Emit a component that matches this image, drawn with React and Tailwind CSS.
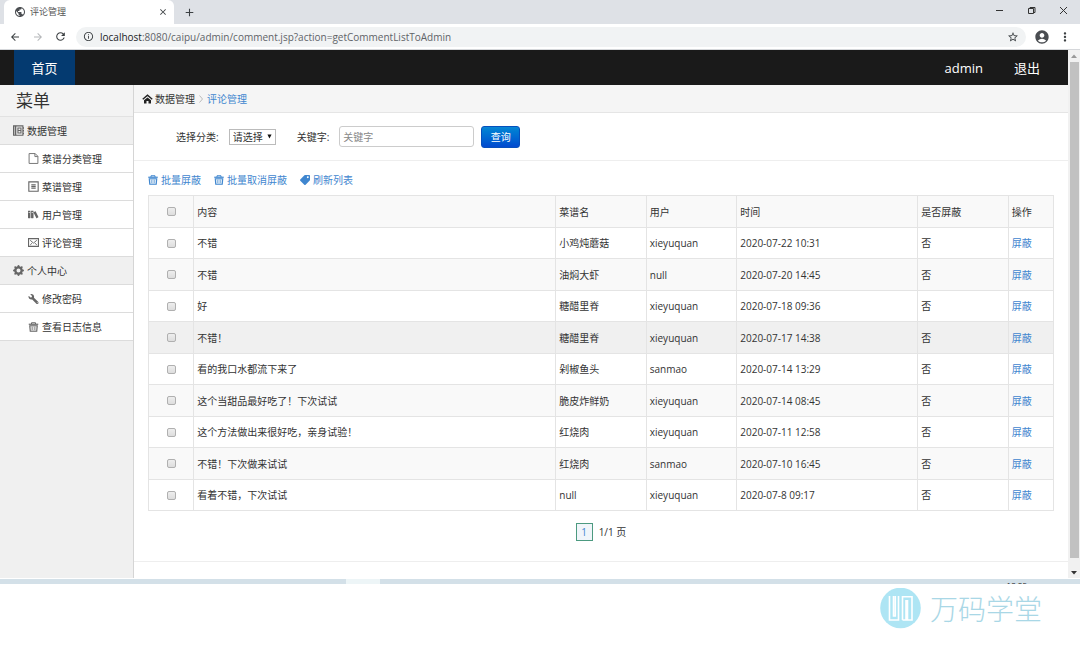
import { useState } from "react";
import {
  MdPublic, MdClose, MdAdd, MdArrowBack, MdArrowForward, MdRefresh,
  MdInfoOutline, MdStarBorder, MdAccountCircle, MdMoreVert
} from "react-icons/md";
import { FaTag, FaWrench } from "react-icons/fa";
import { BsGearFill } from "react-icons/bs";
import { ImBooks } from "react-icons/im";

const comments = [
  { id: 1, content: "不错", dish: "小鸡炖蘑菇", user: "xieyuquan", time: "2020-07-22 10:31" },
  { id: 2, content: "不错", dish: "油焖大虾", user: "null", time: "2020-07-20 14:45" },
  { id: 3, content: "好", dish: "糖醋里脊", user: "xieyuquan", time: "2020-07-18 09:36" },
  { id: 4, content: "不错！", dish: "糖醋里脊", user: "xieyuquan", time: "2020-07-17 14:38", active: true },
  { id: 5, content: "看的我口水都流下来了", dish: "剁椒鱼头", user: "sanmao", time: "2020-07-14 13:29" },
  { id: 6, content: "这个当甜品最好吃了！下次试试", dish: "脆皮炸鲜奶", user: "xieyuquan", time: "2020-07-14 08:45" },
  { id: 7, content: "这个方法做出来很好吃，亲身试验！", dish: "红烧肉", user: "xieyuquan", time: "2020-07-11 12:58" },
  { id: 8, content: "不错！下次做来试试", dish: "红烧肉", user: "sanmao", time: "2020-07-10 16:45" },
  { id: 9, content: "看着不错，下次试试", dish: "null", user: "xieyuquan", time: "2020-07-8 09:17" },
];

const columns = [
  { label: "内容", width: "w-[40%]" },
  { label: "菜谱名", width: "w-[10%]" },
  { label: "用户", width: "w-[10%]" },
  { label: "时间", width: "w-[20%]" },
  { label: "是否屏蔽", width: "w-[10%]" },
  { label: "操作", width: "w-[5%]" },
];

function HomeIcon() {
  return (
    <svg viewBox="0 0 22 20" className="h-[10px] w-[11px]">
      <path d="M1.5 10.5 11 2.5l9.5 8" fill="none" stroke="#222" strokeWidth="2.8" />
      <path d="M4 12.5 11 6.800l7 5.700V19h-5v-5H9v5H4z" fill="#222" />
    </svg>
  );
}

function TrashIcon({ className }) {
  return (
    <svg viewBox="0 0 20 20" className={className} fill="none" stroke="currentColor">
      <path d="M0.500 4.500h19" strokeWidth="2.4" />
      <path d="M6 4V1.500h8V4" strokeWidth="2" />
      <path d="M2.500 7.500h15l-1 11h-13z" fill="currentColor" fillOpacity="0.2" strokeWidth="2.2" />
      <path d="M7.500 9.500v6.500M12.500 9.500v6.500" strokeWidth="1.2" />
    </svg>
  );
}

function BookIcon() {
  return (
    <svg viewBox="0 0 20 20" className="h-[11px] w-[11px]" fill="none" stroke="#666" strokeWidth="2">
      <path d="M1 1.500h17v17H1z" />
      <path d="M4.500 1.500v17" strokeWidth="3" />
      <path d="M9 5.500h5.500v9H9zM9 10h5.500" />
      <path d="M19 4v3M19 9v3M19 14v3" />
    </svg>
  );
}

function PageIcon() {
  return (
    <svg viewBox="0 0 20 20" className="h-[11px] w-[11px]" fill="none" stroke="#777" strokeWidth="1.8">
      <path d="M2 1h11l5 5v13H2z" />
      <path d="M12.500 1v5.500H18" />
    </svg>
  );
}

function RecipeIcon() {
  return (
    <svg viewBox="0 0 20 20" className="h-[11px] w-[11px]" fill="none" stroke="#666" strokeWidth="2">
      <path d="M1.500 1.500h17v17h-17z" />
      <path d="M6 7h8M6 10h8M6 13h8" />
    </svg>
  );
}

function MailIcon() {
  return (
    <svg viewBox="0 0 20 20" className="h-[11px] w-[11px]" fill="none" stroke="#666" strokeWidth="2">
      <path d="M1 3h18v14H1z" />
      <path d="M4 6l6 5 6-5M4 14.500l3.500-3.500M16 14.500 12.500 11" strokeWidth="1.7" />
    </svg>
  );
}

const menu = [
  {
    title: "数据管理",
    icon: <BookIcon />,
    items: [
      { label: "菜谱分类管理", icon: <PageIcon /> },
      { label: "菜谱管理", icon: <RecipeIcon /> },
      { label: "用户管理", icon: <ImBooks className="h-[11px] w-[11px]" /> },
      { label: "评论管理", icon: <MailIcon /> },
    ],
  },
  {
    title: "个人中心",
    icon: <BsGearFill className="h-[11px] w-[11px] text-[#666]" />,
    items: [
      { label: "修改密码", icon: <FaWrench className="h-[10px] w-[11px] -scale-x-100" /> },
      { label: "查看日志信息", icon: <TrashIcon className="h-[10px] w-[11px]" /> },
    ],
  },
];

function BrowserBar() {
  return (
    <header className="text-[#3c4043]">
      <div className="flex h-6 items-center bg-[#dee1e6]">
        <div className="ml-1 flex h-full w-[170px] items-center rounded-t-md bg-white pl-[10px] pr-[6px]">
          <MdPublic className="h-3 w-3 text-[#4a4d51]" />
          <span className="ml-1 flex-1 text-[9px] text-[#555]">评论管理</span>
          <button type="button" aria-label="关闭标签页"><MdClose className="h-[10px] w-[10px]" /></button>
        </div>
        <button type="button" aria-label="新标签页" className="ml-[9px]"><MdAdd className="h-[13px] w-[13px]" /></button>
        <div className="ml-auto flex items-center gap-[23px] pb-1 pr-3">
          <button type="button" aria-label="最小化">
            <svg viewBox="0 0 9 9" className="h-[9px] w-[9px]" stroke="#333" fill="none"><path d="M1 4.500h7" /></svg>
          </button>
          <button type="button" aria-label="还原">
            <svg viewBox="0 0 9 9" className="h-[9px] w-[9px]" stroke="#333" fill="none"><path d="M1.500 2.500h5v5h-5zM3 2.500v-1h5v5H6.500" /></svg>
          </button>
          <button type="button" aria-label="关闭窗口">
            <svg viewBox="0 0 9 9" className="h-[9px] w-[9px]" stroke="#333" fill="none"><path d="M1 1l7 7M8 1 1 8" /></svg>
          </button>
        </div>
      </div>
      <div className="flex h-[26px] items-center border-b border-[#d5d7da] bg-white pl-[9px] pr-2">
        <button type="button" aria-label="后退"><MdArrowBack className="h-3 w-3" /></button>
        <button type="button" aria-label="前进" className="ml-[11px]"><MdArrowForward className="h-3 w-3 text-[#b5b7ba]" /></button>
        <button type="button" aria-label="刷新" className="ml-[10px]"><MdRefresh className="h-[13px] w-[13px]" /></button>
        <div className="ml-[9px] flex h-5 flex-1 items-center rounded-full bg-[#f1f3f4] pl-[7px] pr-[7px]">
          <MdInfoOutline className="h-[11px] w-[11px]" />
          <span className="ml-[6px] flex-1 text-[#5f6368]">
            <span className="text-[#202124]">localhost</span>:8080/caipu/admin/comment.jsp?action=getCommentListToAdmin
          </span>
          <MdStarBorder className="h-3 w-3" />
        </div>
        <MdAccountCircle className="ml-2 h-4 w-4 text-[#4a4d51]" />
        <MdMoreVert className="ml-2 h-[14px] w-[14px]" />
      </div>
    </header>
  );
}

function Sidebar() {
  return (
    <aside className="w-[134px] shrink-0 border-r border-[#d5d5d5] bg-[#f0f0f0] text-[#333]">
      <h1 className="flex h-8 items-center border-b border-[#e2e2e2] bg-[#f3f3f3] pl-4 text-[17px]">菜单</h1>
      {menu.map((group) => (
        <section key={group.title}>
          <h2 className="flex h-7 items-center gap-[3px] border-b border-[#dcdcdc] pl-[13px]">
            {group.icon}
            {group.title}
          </h2>
          <ul>
            {group.items.map((item) => (
              <li key={item.label} className="border-b border-[#dcdcdc] bg-white">
                <a href="#" className="flex h-[27px] items-center gap-[3px] pl-7">
                  <span className="text-[#666]">{item.icon}</span>
                  {item.label}
                </a>
              </li>
            ))}
          </ul>
        </section>
      ))}
    </aside>
  );
}

function Check(props) {
  return (
    <input
      type="checkbox"
      className="mx-auto block h-[9px] w-[9px] appearance-none rounded-[2px] border border-[#b0b0b0] bg-linear-to-b from-[#eee] to-[#ddd] checked:from-[#5a98de] checked:to-[#5a98de]"
      {...props}
    />
  );
}

function Filters() {
  return (
    <form className="flex h-12 items-center border-b border-[#eee] pl-[42px]" onSubmit={(e) => e.preventDefault()}>
      <label htmlFor="category">选择分类:</label>
      <div className="relative ml-[10px]">
        <select id="category" className="block h-4 w-[47px] appearance-none border border-[#bbb] bg-white pl-[3px] leading-[14px] outline-none">
          <option>请选择</option>
        </select>
        <svg viewBox="0 0 6 6" className="pointer-events-none absolute right-1 top-[5px] h-[5px] w-[5px]">
          <path d="M0.500 0.500h5L3 5.500z" fill="#111" />
        </svg>
      </div>
      <label htmlFor="keyword" className="ml-[21px]">关键字:</label>
      <input
        id="keyword"
        type="text"
        placeholder="关键字"
        className="ml-[10px] h-[21px] w-[135px] rounded-[3px] border border-[#ccc] px-[3px] outline-none placeholder:text-[#888]"
      />
      <button type="submit" className="ml-[7px] h-[22px] w-[39px] rounded-[3px] border border-[#0650bd] bg-linear-to-b from-[#0a86d4] to-[#0449cf] text-white">
        查询
      </button>
    </form>
  );
}

function CommentTable() {
  const [selected, setSelected] = useState([]);
  const allSelected = selected.length === comments.length;

  const toggle = (id) =>
    setSelected(selected.includes(id) ? selected.filter((s) => s !== id) : [...selected, id]);

  return (
    <table className="w-full table-fixed border-collapse text-left [&_td]:border [&_td]:border-[#e4e4e4] [&_td]:px-[3px] [&_th]:border [&_th]:border-[#e4e4e4] [&_th]:px-[3px] [&_th]:font-normal">
      <thead>
        <tr className="h-8 bg-[#f9f9f9]">
          <th className="w-[5%]">
            <Check aria-label="全选" checked={allSelected} onChange={() => setSelected(allSelected ? [] : comments.map((c) => c.id))} />
          </th>
          {columns.map((c) => <th key={c.label} className={c.width}>{c.label}</th>)}
        </tr>
      </thead>
      <tbody>
        {comments.map((c) => (
          <tr key={c.id} className={`odd:h-[31px] even:h-8 ${c.active ? "bg-[#f0f0f0]" : "even:bg-[#f9f9f9]"}`}>
            <td><Check aria-label={c.content} checked={selected.includes(c.id)} onChange={() => toggle(c.id)} /></td>
            <td>{c.content}</td>
            <td>{c.dish}</td>
            <td>{c.user}</td>
            <td>{c.time}</td>
            <td>否</td>
            <td><a href="#" className="text-[#3f86cf]">屏蔽</a></td>
          </tr>
        ))}
      </tbody>
    </table>
  );
}

function Scrollbar() {
  return (
    <div className="flex w-3 shrink-0 flex-col items-center bg-[#f1f1f1]">
      <svg viewBox="0 0 6 4" className="my-1 h-1 w-[6px]"><path d="M0 4h6L3 0.500z" fill="#999" /></svg>
      <div className="w-[9px] flex-1 bg-[#c1c1c1]" />
      <svg viewBox="0 0 6 4" className="mb-[3px] mt-[13px] h-1 w-[6px]"><path d="M0 0h6L3 3.500z" fill="#333" /></svg>
    </div>
  );
}

function Brand() {
  return (
    <div className="flex items-center justify-end gap-[9px] pr-[38px] pt-1">
      <svg viewBox="0 0 41 41" className="h-[41px] w-[41px]">
        <circle cx="20.500" cy="20" r="20.300" fill="#aee5f4" />
        <g fill="none" stroke="#fff" strokeWidth="1.6">
          <path d="M9.500 8v24h9V8M13.500 8v20h1.800V8" />
          <path d="M22.500 32V8.800h9.500V32h-4.500V12.800h-1.500V32h-3.500" />
        </g>
      </svg>
      <span className="text-[28px] font-light leading-10 text-[#a9d7e6]">万码学堂</span>
    </div>
  );
}

export default function App() {
  return (
    <div className="min-h-screen bg-white font-['Open_Sans','Noto_Sans_CJK_SC',sans-serif] text-[10px] leading-4 text-[#333]">
      <BrowserBar />
      <div className="flex">
        <div className="min-w-0 flex-1">
          <nav className="flex h-[35px] items-stretch bg-[#1a1a1a] pl-[14px] pr-7 text-[13px] text-white">
            <a href="#" className="flex w-[61px] items-center justify-center bg-[#043a70]">首页</a>
            <a href="#" className="ml-auto flex items-center">admin</a>
            <a href="#" className="ml-[31px] flex items-center">退出</a>
          </nav>
          <div className="flex">
            <Sidebar />
            <main className="min-w-0 flex-1">
              <div className="flex h-7 items-center border-b border-[#e5e5e5] bg-[#f5f5f5] pl-2">
                <HomeIcon />
                <span className="ml-[2px]">数据管理</span>
                <svg viewBox="0 0 4 8" className="mx-1 h-2 w-1"><path d="M0.500 0.500 3.500 4 0.500 7.500" fill="none" stroke="#bbb" /></svg>
                <a href="#" className="text-[#3f86cf]">评论管理</a>
              </div>
              <Filters />
              <div className="px-[14px]">
                <div className="flex h-[34px] items-center gap-[13px] pt-1 text-[#3f86cf]">
                  <a href="#" className="flex items-center gap-[3px]"><TrashIcon className="h-[10px] w-[10px]" />批量屏蔽</a>
                  <a href="#" className="flex items-center gap-[3px]"><TrashIcon className="h-[10px] w-[10px]" />批量取消屏蔽</a>
                  <a href="#" className="flex items-center gap-[3px]"><FaTag className="h-[10px] w-[10px] -scale-x-100" />刷新列表</a>
                </div>
                <CommentTable />
                <div className="flex items-center justify-center gap-[6px] pb-5 pt-3">
                  <a href="#" className="flex h-[18px] w-[17px] items-center justify-center border border-[#4c9a80] bg-[#f0f5fa] text-[#3f86cf]">1</a>
                  <span>1/1 页</span>
                </div>
              </div>
              <div className="h-[17px] border-t border-[#eee]" />
            </main>
          </div>
        </div>
        <Scrollbar />
      </div>
      <div className="mt-px flex h-[5px] overflow-hidden bg-[#d3e0e8]">
        <div className="ml-[32%] w-[34px] bg-[#edf5f7]" />
        <span className="ml-auto mr-[53px] text-[8px] leading-[12px] text-[#222]">10:05</span>
      </div>
      <Brand />
    </div>
  );
}
